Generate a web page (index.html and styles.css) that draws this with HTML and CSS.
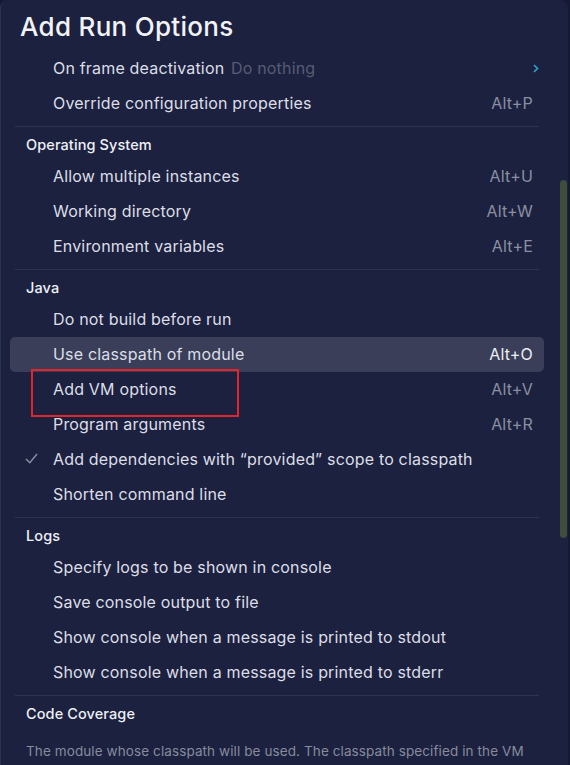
FILE: index.html
```html
<!DOCTYPE html>
<html>
<head>
<meta charset="utf-8">
<link rel="stylesheet" href="styles.css">
</head>
<body>
<div class="panel">
  <h1 class="title">Add Run Options</h1>
  <div class="list">
    <div class="row"><span class="label">On frame deactivation <span class="muted">Do nothing</span></span><span class="chev"><svg width="6" height="9" viewBox="0 0 6 9"><path d="M1 1l3.5 3.5L1 8" fill="none" stroke="#2aa6c9" stroke-width="1.6"/></svg></span></div>
    <div class="row"><span class="label">Override configuration properties</span><span class="key">Alt+P</span></div>
    <div class="sep"></div>
    <div class="header">Operating System</div>
    <div class="row"><span class="label">Allow multiple instances</span><span class="key">Alt+U</span></div>
    <div class="row"><span class="label">Working directory</span><span class="key">Alt+W</span></div>
    <div class="row"><span class="label">Environment variables</span><span class="key">Alt+E</span></div>
    <div class="sep"></div>
    <div class="header">Java</div>
    <div class="row"><span class="label">Do not build before run</span></div>
    <div class="row active"><span class="label">Use classpath of module</span><span class="key">Alt+O</span></div>
    <div class="row"><span class="label">Add VM options</span><span class="key">Alt+V</span><span class="mark"></span></div>
    <div class="row"><span class="label">Program arguments</span><span class="key">Alt+R</span></div>
    <div class="row"><span class="check"><svg width="13" height="11" viewBox="0 0 13 11"><path d="M1 6l3.8 3.8L12 1" fill="none" stroke="#8b8fa0" stroke-width="1.4"/></svg></span><span class="label">Add dependencies with “provided” scope to classpath</span></div>
    <div class="row"><span class="label">Shorten command line</span></div>
    <div class="sep"></div>
    <div class="header">Logs</div>
    <div class="row"><span class="label">Specify logs to be shown in console</span></div>
    <div class="row"><span class="label">Save console output to file</span></div>
    <div class="row"><span class="label">Show console when a message is printed to stdout</span></div>
    <div class="row"><span class="label">Show console when a message is printed to stderr</span></div>
    <div class="sep"></div>
    <div class="header">Code Coverage</div>
  </div>
  <p class="desc">The module whose classpath will be used. The classpath specified in the VM options takes precedence over this one.</p>
  <div class="scrollbar"></div>
</div>
</body>
</html>
```
FILE: styles.css
```css
html, body {
  margin: 0;
  padding: 0;
  background: #151933;
  height: 765px;
  overflow: hidden;
}
body {
  font-family: Inter, "Noto Sans", sans-serif;
}
.panel {
  position: relative;
  box-sizing: border-box;
  width: 568px;
  height: 800px;
  background: #1c2140;
  border-left: 1px solid #2c3252;
  border-radius: 8px 8px 0 0;
  padding: 10px 0 0 0;
  overflow: hidden;
}
.title {
  margin: 0 0 0 19px;
  font-size: 26px;
  line-height: 34px;
  font-weight: 500;
  color: #f2f3f7;
  letter-spacing: 0.3px;
}
.list {
  display: flex;
  flex-direction: column;
  padding: 7px 24px 0 9px;
}
.row {
  position: relative;
  box-sizing: border-box;
  height: 35px;
  flex: none;
  display: flex;
  align-items: center;
  padding: 0 11px 1px 43px;
  border-radius: 5px;
  font-size: 16px;
  letter-spacing: 0.18px;
  color: #dcdee6;
}
.row.active {
  background: #3a3e59;
}
.row.active .key {
  color: #eceef3;
}
.label {
  flex: 1;
  white-space: nowrap;
}
.muted {
  color: #575c72;
  margin-left: 2px;
}
.key {
  color: #8b8fa0;
}
.chev {
  display: flex;
  margin-right: -6px;
}
.check {
  position: absolute;
  left: 15px;
  top: 11px;
  display: flex;
}
.sep {
  height: 1px;
  flex: none;
  background: #2e3353;
  margin: 4.5px 5px 9px 5px;
}
.header {
  height: 20px;
  flex: none;
  line-height: 18px;
  padding-bottom: 2px;
  box-sizing: border-box;
  margin: 0 0 3.5px 16px;
  font-size: 14.5px;
  font-weight: 500;
  color: #eef0f5;
  letter-spacing: 0.1px;
}
.desc {
  margin: 13px 30px 0 25px;
  font-size: 13.5px;
  line-height: 20px;
  letter-spacing: 0.1px;
  color: #878b9c;
}
.mark {
  position: absolute;
  left: 21px;
  top: -3px;
  width: 204px;
  height: 44px;
  border: 2px solid #e3242b;
}
.scrollbar {
  position: absolute;
  left: 559px;
  top: 180px;
  width: 7px;
  height: 358px;
  border-radius: 4px;
  background: #3f4d3a;
}
```
